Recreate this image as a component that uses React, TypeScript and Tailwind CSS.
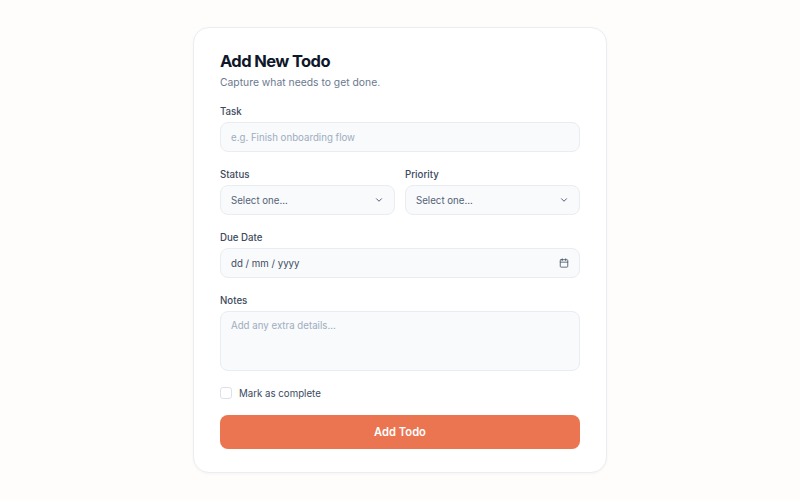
import { Calendar, ChevronDown } from 'lucide-react';

const fieldClass =
  'h-[29.5px] w-full rounded-lg border border-[#e9edf2] bg-[#f8fafc] pl-[10px] pr-[10px] flex items-center justify-between text-[9.7px] leading-[14px]';

function Label({ children }: { children: string }) {
  return <div className="mb-[3px] h-[14px] text-[9.7px] leading-[14px] font-medium text-[#3d4a5e]">{children}</div>;
}

function SelectBox({ label }: { label: string }) {
  return (
    <div className="flex-1">
      <Label>{label}</Label>
      <div className={`${fieldClass} text-[#566377]`}>
        <span className="pt-[2px]">Select one...</span>
        <ChevronDown size={10} strokeWidth={2.25} className="text-[#475569]" />
      </div>
    </div>
  );
}

export default function App() {
  return (
    <div className="min-h-[500px] bg-[#fffdfb] flex items-center justify-center font-['Inter',sans-serif]">
      <div className="w-[414px] h-[446px] rounded-2xl border border-[#ebedf0] bg-white px-[26px] pt-[22px] shadow-[0_1px_3px_rgba(15,23,42,0.04)]">
        <h1 className="h-[22px] text-[16.5px] leading-[22px] font-bold tracking-[-0.6px] text-[#0f172a]">Add New Todo</h1>
        <p className="mb-[13px] h-[20px] text-[10.35px] leading-[20px] text-[#6b7a8f]">Capture what needs to get done.</p>

        <Label>Task</Label>
        <div className={`${fieldClass} text-[#a0adbd]`}>
          <span className="pt-[2px]">e.g. Finish onboarding flow</span>
        </div>

        <div className="mt-[16.5px] flex gap-[10px]">
          <SelectBox label="Status" />
          <SelectBox label="Priority" />
        </div>

        <div className="mt-[16.5px]">
          <Label>Due Date</Label>
          <div className={`${fieldClass} text-[#3d4a5e]`}>
            <span className="pt-[2px]">dd / mm / yyyy</span>
            <Calendar size={10} strokeWidth={2} className="text-[#475569]" />
          </div>
        </div>

        <div className="mt-[16.5px]">
          <Label>Notes</Label>
          <div className="h-[59.5px] w-full rounded-lg border border-[#e9edf2] bg-[#f8fafc] px-[10px] py-[7px] text-[9.7px] leading-[14px] text-[#a0adbd]">
            Add any extra details...
          </div>
        </div>

        <div className="mt-[16.5px] flex h-[12px] items-center gap-[7px]">
          <div className="h-[12px] w-[12px] rounded-[3px] border border-[#dde1e7] bg-white" />
          <span className="pt-[2px] text-[9.7px] leading-[12px] text-[#3d4a5e]">Mark as complete</span>
        </div>

        <button className="mt-[16px] h-[34px] w-full rounded-lg bg-[#ea7550] pt-[1px] text-[11.2px] font-semibold text-white">
          Add Todo
        </button>
      </div>
    </div>
  );
}
